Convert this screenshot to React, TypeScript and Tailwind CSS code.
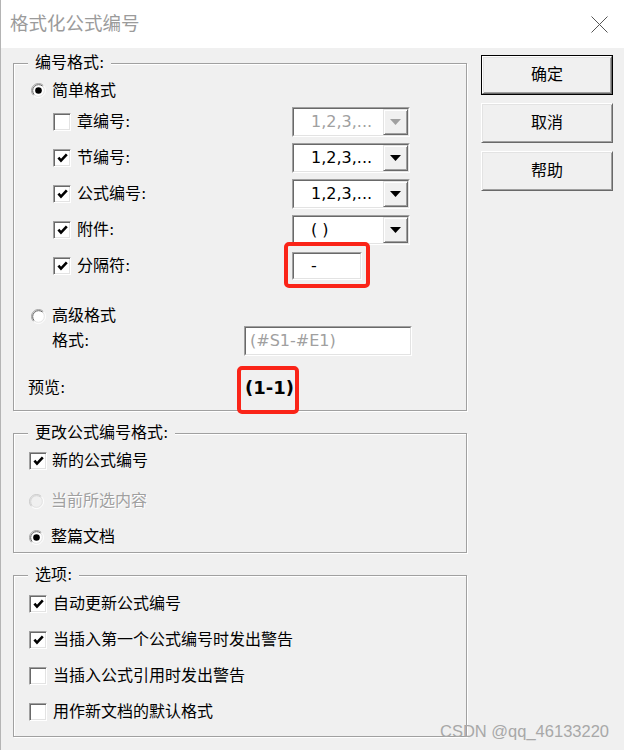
import React from 'react';

// Classic Win32 dialog: "格式化公式编号"

function CheckBox({ checked }: { checked?: boolean }) {
  return (
    <div className="w-[18px] h-[18px] shrink-0 bg-white border border-t-[#a0a0a0] border-l-[#a0a0a0] border-r-white border-b-white shadow-[inset_1px_1px_0_#696969,inset_-1px_-1px_0_#e3e3e3] flex items-center justify-center">
      {checked && (
        <svg width="11" height="10" viewBox="0 0 11 10">
          <path d="M1.4 4.6 L4 7.6 L9.8 1.4" stroke="#000" strokeWidth="2.6" fill="none" />
        </svg>
      )}
    </div>
  );
}

function Radio({ checked, disabled }: { checked?: boolean; disabled?: boolean }) {
  return (
    <svg width="15" height="15" viewBox="0 0 15 15" className="shrink-0">
      <circle cx="7.5" cy="7.5" r="6.5" fill={disabled ? '#f0f0f0' : '#fff'} />
      <path d="M2.55 12.45 A7 7 0 0 1 12.45 2.55" stroke={disabled ? '#c8c8c8' : '#a0a0a0'} fill="none" />
      <path d="M3.26 11.74 A6 6 0 0 1 11.74 3.26" stroke={disabled ? '#d4d4d4' : '#696969'} fill="none" />
      <path d="M12.45 2.55 A7 7 0 0 1 2.55 12.45" stroke="#fff" fill="none" />
      <path d="M11.74 3.26 A6 6 0 0 1 3.26 11.74" stroke="#e3e3e3" fill="none" />
      {checked && <circle cx="7.5" cy="7.5" r="3.3" fill="#000" />}
    </svg>
  );
}

function ComboBox({ value, disabled }: { value: string; disabled?: boolean }) {
  return (
    <div className="w-[118px] h-[30px] border border-t-[#a0a0a0] border-l-[#a0a0a0] border-r-white border-b-white">
      <div className="h-full bg-white border border-t-[#696969] border-l-[#696969] border-r-[#e3e3e3] border-b-[#e3e3e3] flex items-center">
        <span className={`flex-1 pl-[17px] leading-[20px] ${disabled ? 'text-[#a0a0a0]' : 'text-black'}`}>{value}</span>
        <div className="w-[25px] h-full bg-[#f0f0f0] border border-t-[#e3e3e3] border-l-[#e3e3e3] border-r-[#696969] border-b-[#696969] shadow-[inset_1px_1px_0_#fff,inset_-1px_-1px_0_#a0a0a0] flex items-center justify-center">
          <svg width="11" height="6" viewBox="0 0 11 6">
            <polygon points="0,0 11,0 5.5,6" fill={disabled ? '#a0a0a0' : '#000'} />
          </svg>
        </div>
      </div>
    </div>
  );
}

function TextBox({ value, disabled, className }: { value: string; disabled?: boolean; className: string }) {
  return (
    <div className={`border border-t-[#a0a0a0] border-l-[#a0a0a0] border-r-white border-b-white ${className}`}>
      <div className="h-full bg-white border border-t-[#696969] border-l-[#696969] border-r-[#e3e3e3] border-b-[#e3e3e3] flex items-center">
        <span className={`leading-[20px] ${disabled ? 'pl-[4px] text-[#a0a0a0]' : 'pl-[17px] text-black'}`}>{value}</span>
      </div>
    </div>
  );
}

function Group({ title, className, children }: { title: string; className: string; children: React.ReactNode }) {
  return (
    <div className={`relative border border-[#a0a0a0] shadow-[1px_1px_0_#fff,inset_1px_1px_0_#fff] ${className}`}>
      <span className="absolute left-[14px] top-[-11px] h-[20px] px-[7px] bg-[#f0f0f0] leading-[20px]">{title}</span>
      {children}
    </div>
  );
}

function DialogButton({ label, isDefault }: { label: string; isDefault?: boolean }) {
  return (
    <div className={`h-[40px] w-[132px] ${isDefault ? 'border border-black' : ''}`}>
      <div className="h-full bg-[#f0f0f0] border border-t-white border-l-white border-r-[#696969] border-b-[#696969] shadow-[inset_1px_1px_0_#e3e3e3,inset_-1px_-1px_0_#a0a0a0] flex items-center justify-center leading-[20px]">
        {label}
      </div>
    </div>
  );
}

const numberRows = [
  { label: '章编号:', checked: false, value: '1,2,3,...', disabled: true },
  { label: '节编号:', checked: true, value: '1,2,3,...' },
  { label: '公式编号:', checked: true, value: '1,2,3,...' },
  { label: '附件:', checked: true, value: '( )' },
];

const options = [
  { label: '自动更新公式编号', checked: true },
  { label: '当插入第一个公式编号时发出警告', checked: true },
  { label: '当插入公式引用时发出警告', checked: false },
  { label: '用作新文档的默认格式', checked: false },
];

export default function App() {
  return (
    <div className="relative w-[624px] h-[750px] overflow-hidden bg-[#f0f0f0] border-l border-[#b4b4b4] text-[16px] text-black font-['DejaVu_Sans','Noto_Sans_CJK_SC',sans-serif]">
      {/* Title bar */}
      <div className="h-[48px] bg-white flex items-center justify-between pl-[9px] pr-[16px]">
        <span className="text-[18.5px] leading-[24px] text-[#9b9b9b]">格式化公式编号</span>
        <svg width="17" height="17" viewBox="0 0 17 17">
          <path d="M0.5 0.5 L16.5 16.5 M16.5 0.5 L0.5 16.5" stroke="#555" strokeWidth="1" />
        </svg>
      </div>

      <div className="flex">
        {/* Left column */}
        <div className="ml-[12px] w-[454px] pt-[15px] flex flex-col">
          <Group title="编号格式:" className="h-[348px] pt-[13px]">
            <div className="h-[27px] flex items-center pl-[17px] gap-[6px]">
              <Radio checked />
              <span className="leading-[20px]">简单格式</span>
            </div>
            {numberRows.map(row => (
              <div key={row.label} className="h-[36px] flex items-center pl-[39px]">
                <CheckBox checked={row.checked} />
                <span className="w-[221px] pl-[6px] leading-[20px]">{row.label}</span>
                <ComboBox value={row.value} disabled={row.disabled} />
              </div>
            ))}
            <div className="h-[36px] flex items-center pl-[39px]">
              <CheckBox checked />
              <span className="w-[221px] pl-[6px] leading-[20px]">分隔符:</span>
              <div className="relative">
                <TextBox value="-" className="w-[70px] h-[28px]" />
                <div className="absolute left-[-8px] top-[-10px] w-[86px] h-[46px] border-[4px] border-[#fa2418] rounded-[5px]" />
              </div>
            </div>

            <div className="mt-[22px] h-[20px] flex items-center pl-[17px] gap-[6px]">
              <Radio />
              <span className="leading-[20px]">高级格式</span>
            </div>
            <div className="h-[30px] flex items-center pl-[38px]">
              <span className="w-[192px] leading-[20px]">格式:</span>
              <TextBox value="(#S1-#E1)" disabled className="w-[168px] h-[30px]" />
            </div>
            <div className="mt-[20px] h-[24px] flex items-center pl-[14px]">
              <span className="w-[217px] leading-[20px]">预览:</span>
              <span className="relative font-bold text-[18px] leading-[22px]">
                (1-1)
                <span className="absolute left-[-8px] top-[-11px] w-[62px] h-[48px] border-[4px] border-[#fa2418] rounded-[5px]" />
              </span>
            </div>
          </Group>

          <Group title="更改公式编号格式:" className="mt-[22px] h-[120px] pt-[15px]">
            <div className="h-[24px] flex items-center pl-[15px] gap-[5px]">
              <CheckBox checked />
              <span className="leading-[20px]">新的公式编号</span>
            </div>
            <div className="mt-[16px] h-[24px] flex items-center pl-[15px] gap-[7px]">
              <Radio disabled />
              <span className="leading-[20px] text-[#a0a0a0] [text-shadow:1px_1px_0_#fff]">当前所选内容</span>
            </div>
            <div className="mt-[12px] h-[24px] flex items-center pl-[15px] gap-[7px]">
              <Radio checked />
              <span className="leading-[20px]">整篇文档</span>
            </div>
          </Group>

          <Group title="选项:" className="mt-[22px] h-[162px] pt-[10px]">
            {options.map(opt => (
              <div key={opt.label} className="h-[36px] flex items-center pl-[15px] gap-[6px]">
                <CheckBox checked={opt.checked} />
                <span className="leading-[20px]">{opt.label}</span>
              </div>
            ))}
          </Group>
        </div>

        {/* Right column: buttons */}
        <div className="ml-[14px] pt-[7px] flex flex-col gap-[8px]">
          <DialogButton label="确定" isDefault />
          <DialogButton label="取消" />
          <DialogButton label="帮助" />
        </div>
      </div>

      {/* Watermark */}
      <span className="absolute left-[439px] top-[723px] text-[16.5px] leading-none text-[#a8a8a8] font-['Liberation_Sans',sans-serif]">
        CSDN @qq_46133220
      </span>
    </div>
  );
}
